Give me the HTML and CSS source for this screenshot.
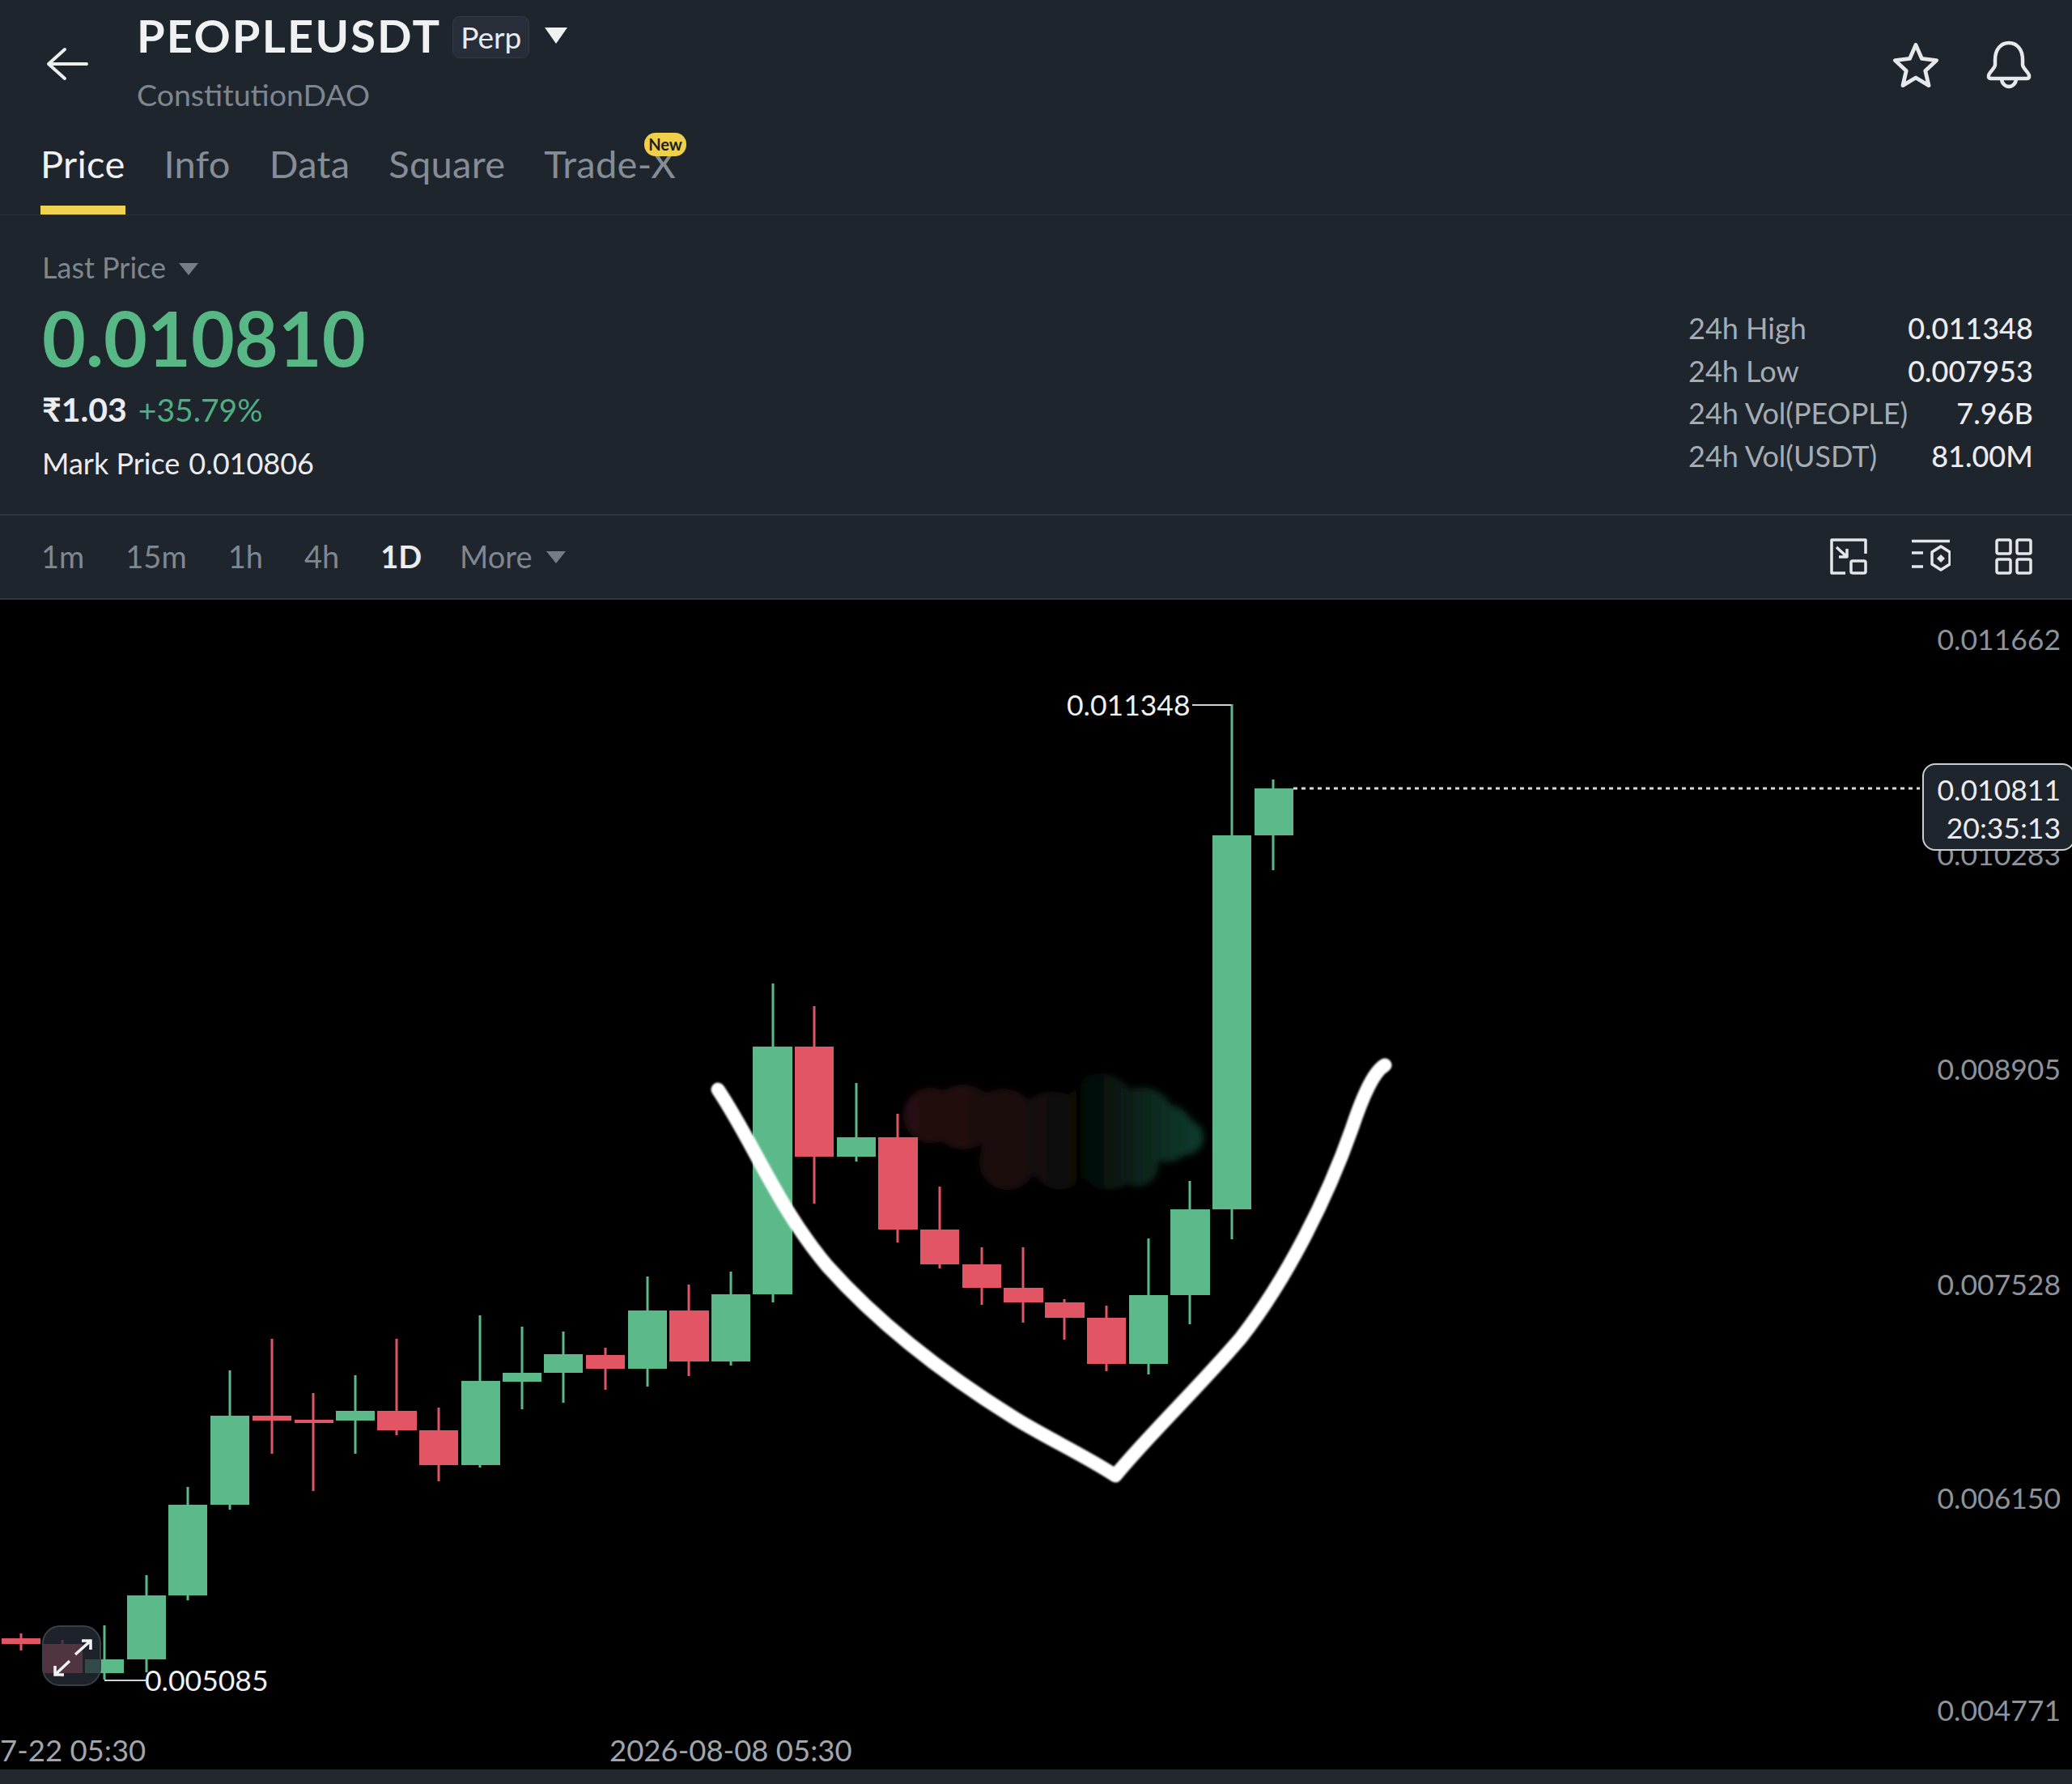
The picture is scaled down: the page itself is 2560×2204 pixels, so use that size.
FILE: index.html
```html
<!DOCTYPE html>
<html lang="en">
<head>
    <meta charset="UTF-8">
    <title>PEOPLEUSDT Perp</title>
    <link rel="stylesheet" href="styles.css">
</head>
<body>
<div class="page">
    <div class="top">
        <svg class="back" width="52" height="42" viewBox="0 0 52 42"><path d="M50 21H4M23 3 3 21l20 18"/></svg>
        <div class="title-block">
            <div class="title-row">
                <span class="symbol">PEOPLEUSDT</span>
                <span class="perp">Perp</span>
                <span class="caret caret-white"></span>
            </div>
            <div class="subtitle">ConstitutionDAO</div>
        </div>
        <div class="top-actions">
            <svg class="top-icon" width="62" height="62" viewBox="0 0 58 58"><path d="M29 5 36 21 53 23 40 35 44 52 29 43 14 52 18 35 5 23 22 21Z"/></svg>
            <svg class="top-icon" width="56" height="60" viewBox="0 0 56 60"><path d="M11 24C11 11 18 3 28 3S45 11 45 24V30C45 34 52 39 53 43 53.500 46 52 47 50 47H6C4 47 2.500 46 3 43 4 39 11 34 11 30ZM19 47A9 10 0 0 0 37 47"/></svg>
        </div>
    </div>

    <div class="tabs">
        <span class="tab active">Price</span>
        <span class="tab">Info</span>
        <span class="tab">Data</span>
        <span class="tab">Square</span>
        <span class="tab">Trade-X<span class="new">New</span></span>
    </div>

    <div class="stats">
        <div class="price-col">
            <div class="last-label">Last Price <span class="caret caret-grey"></span></div>
            <div class="last-price">0.010810</div>
            <div class="fiat-row"><span class="fiat">₹1.03</span><span class="change">+35.79%</span></div>
            <div class="mark-row"><span>Mark Price</span><span>0.010806</span></div>
        </div>
        <div class="day-grid">
            <span class="day-label">24h High</span><span class="day-value">0.011348</span>
            <span class="day-label">24h Low</span><span class="day-value">0.007953</span>
            <span class="day-label">24h Vol(PEOPLE)</span><span class="day-value">7.96B</span>
            <span class="day-label">24h Vol(USDT)</span><span class="day-value">81.00M</span>
        </div>
    </div>

    <div class="toolbar">
        <div class="intervals">
            <span>1m</span>
            <span>15m</span>
            <span>1h</span>
            <span>4h</span>
            <span class="current">1D</span>
            <span class="more">More <span class="caret caret-grey"></span></span>
        </div>
        <div class="tools">
            <svg class="tool" width="46" height="45" viewBox="0 0 46 45"><path d="M44 19V2H2V43H19M8 11 21 23M21 13V23H11"/><rect x="26" y="28" width="18" height="15" rx="2"/></svg>
            <svg class="tool" width="48" height="42" viewBox="0 0 48 42"><path d="M0 2.500H47M0 17H14M0 34H14M36 9 47 16V31L36 38 25 31V16Z"/><path class="tool-dot" d="M36 19 41 24 36 29 31 24Z"/></svg>
            <svg class="tool" width="46" height="45" viewBox="0 0 46 45"><rect x="2" y="2" width="17" height="17" rx="2"/><rect x="27" y="2" width="17" height="17" rx="2"/><rect x="2" y="26" width="17" height="17" rx="2"/><rect x="27" y="26" width="17" height="17" rx="2"/></svg>
        </div>
    </div>

    <div class="chart">
        <svg class="plot" width="2560" height="1445" viewBox="0 741 2560 1445">
            <defs>
                <linearGradient id="smudge-fade" gradientUnits="userSpaceOnUse" x1="1120" y1="0" x2="1480" y2="0">
                    <stop offset="0" stop-color="#261112"/>
                    <stop offset="0.4" stop-color="#1a0c0d"/>
                    <stop offset="0.6" stop-color="#050605"/>
                    <stop offset="0.85" stop-color="#0a2a20"/>
                    <stop offset="1" stop-color="#0e3a2c"/>
                </linearGradient>
                <filter id="soft"><feGaussianBlur stdDeviation="1.2"/></filter>
                <filter id="softer"><feGaussianBlur stdDeviation="4"/></filter>
            </defs>

            <!-- wiped out candles -->
            <g class="smudge">
                <circle cx="1150" cy="1378" r="34"/>
                <circle cx="1190" cy="1380" r="40"/>
                <circle cx="1240" cy="1385" r="40"/>
                <circle cx="1245" cy="1435" r="35"/>
                <circle cx="1300" cy="1390" r="42"/>
                <circle cx="1310" cy="1435" r="35"/>
                <circle cx="1360" cy="1368" r="42"/>
                <circle cx="1370" cy="1430" r="40"/>
                <circle cx="1410" cy="1385" r="42"/>
                <circle cx="1440" cy="1400" r="36"/>
                <circle cx="1405" cy="1440" r="26"/>
                <circle cx="1465" cy="1405" r="22"/>
            </g>

            <!-- candles, left to right -->
            <g class="up">
                <path d="M129 2008V2075M181 1946V2066M232 1837V1977M284 1693V1865M439 1699V1796M593 1625V1813M645 1639V1741M696 1645V1733M800 1577V1713M903 1571V1687M955 1215V1609M1058 1338V1435M1419 1530V1698M1470 1459V1636M1522 870V1531M1573 963V1075"/>
                <rect x="105" y="2050" width="48" height="17"/>
                <rect x="157" y="1971" width="48" height="79"/>
                <rect x="208" y="1859" width="48" height="112"/>
                <rect x="260" y="1749" width="48" height="110"/>
                <rect x="415" y="1743" width="48" height="12"/>
                <rect x="570" y="1706" width="48" height="104"/>
                <rect x="621" y="1696" width="48" height="11"/>
                <rect x="672" y="1673" width="48" height="23"/>
                <rect x="776" y="1619" width="48" height="72"/>
                <rect x="879" y="1599" width="48" height="83"/>
                <rect x="930" y="1293" width="49" height="306"/>
                <rect x="1034" y="1405" width="48" height="24"/>
                <rect x="1395" y="1600" width="48" height="85"/>
                <rect x="1446" y="1494" width="49" height="106"/>
                <rect x="1498" y="1032" width="48" height="462"/>
                <rect x="1550" y="974" width="48" height="58"/>
            </g>
            <g class="down">
                <path d="M26 2018V2039M77 2026V2072M336 1654V1796M387 1721V1842M490 1654V1773M542 1739V1830M748 1665V1717M851 1587V1700M1006 1243V1487M1109 1376V1535M1161 1466V1567M1213 1541V1612M1264 1541V1634M1315 1605V1655M1367 1613V1694"/>
                <rect x="2" y="2024" width="48" height="7"/>
                <rect x="53" y="2031" width="49" height="36"/>
                <rect x="312" y="1749" width="48" height="6"/>
                <rect x="364" y="1754" width="48" height="4"/>
                <rect x="466" y="1743" width="49" height="24"/>
                <rect x="518" y="1767" width="48" height="43"/>
                <rect x="724" y="1674" width="48" height="17"/>
                <rect x="827" y="1619" width="49" height="63"/>
                <rect x="982" y="1293" width="48" height="136"/>
                <rect x="1085" y="1405" width="49" height="114"/>
                <rect x="1137" y="1519" width="48" height="43"/>
                <rect x="1189" y="1562" width="48" height="29"/>
                <rect x="1240" y="1591" width="49" height="18"/>
                <rect x="1291" y="1609" width="49" height="19"/>
                <rect x="1343" y="1628" width="48" height="57"/>
            </g>

            <path class="leader" d="M1473 871H1521M129 2076H180"/>
            <path class="last-line" d="M1598 974H2372"/>

            <text class="mark" x="1318" y="884">0.011348</text>
            <text class="mark" x="179" y="2089">0.005085</text>

            <text class="axis" x="2546" y="803">0.011662</text>
            <text class="axis" x="2546" y="1069">0.010283</text>
            <text class="axis" x="2546" y="1334">0.008905</text>
            <text class="axis" x="2546" y="1600">0.007528</text>
            <text class="axis" x="2546" y="1864">0.006150</text>
            <text class="axis" x="2546" y="2126">0.004771</text>

            <text class="time" x="0" y="2176">7-22 05:30</text>
            <text class="time" x="753" y="2176">2026-08-08 05:30</text>

            <!-- hand drawn cup -->
            <path class="cup" d="M887 1346C930 1410 960 1490 1022 1564 1090 1640 1170 1700 1252 1751 1290 1775 1340 1798 1378 1823 1420 1772 1480 1715 1533 1653 1590 1580 1640 1480 1670 1395 1680 1365 1695 1325 1711 1316"/>
        </svg>

        <div class="price-tag">
            <span>0.010811</span>
            <span>20:35:13</span>
        </div>

        <div class="expand">
            <svg width="60" height="60" viewBox="0 0 60 60"><path d="M53 11 34 28M42 11H53V22M27 36 9 53M9 42V53H20"/></svg>
        </div>
    </div>

    <div class="bottom-bar"></div>
</div>
</body>
</html>
```

FILE: styles.css
```css
body {
    margin: 0;
    background: #000;
    font-family: Lato, "Liberation Sans", sans-serif;
    color: #eaecef;
}
.page {
    width: 2560px;
    height: 2204px;
    display: flex;
    flex-direction: column;
    overflow: hidden;
    background: #1f252d;
}

/* caret triangles */
.caret {
    display: inline-block;
    width: 0;
    height: 0;
    border-style: solid;
    border-color: transparent;
    border-bottom-width: 0;
}
.caret-white {
    border-width: 20px 14px 0;
    border-top-color: #f0f1f3;
}
.caret-grey {
    border-width: 15px 12px 0;
    border-top-color: #757d87;
}

/* top bar */
.top {
    height: 155px;
    display: flex;
    align-items: flex-start;
    padding: 0 50px 0 57px;
    box-sizing: border-box;
}
.back {
    margin-top: 58px;
    fill: none;
    stroke: #eceef0;
    stroke-width: 4;
    stroke-linecap: round;
    stroke-linejoin: round;
}
.title-block {
    margin-left: 60px;
    padding-top: 20px;
}
.title-row {
    display: flex;
    align-items: center;
    height: 52px;
}
.symbol {
    font-size: 56px;
    font-weight: 700;
    letter-spacing: 2.200px;
    color: #f0f1f3;
    margin: 0 14px 6px 0;
}
.perp {
    height: 52px;
    line-height: 50px;
    box-sizing: border-box;
    padding: 0 9px;
    border: 1px solid #323944;
    border-radius: 9px;
    background: #272e39;
    font-size: 37px;
    margin-right: 19px;
}
.title-row .caret {
    margin-top: -5px;
}
.subtitle {
    margin-top: 22px;
    font-size: 37.500px;
    color: #7e8690;
}
.top-actions {
    margin-left: auto;
    display: flex;
    gap: 56px;
    padding-top: 50px;
}
.top-icon {
    fill: none;
    stroke: #e6e8eb;
    stroke-width: 4.500;
    stroke-linejoin: round;
    stroke-linecap: round;
}

/* tabs */
.tabs {
    height: 111px;
    box-sizing: border-box;
    display: flex;
    gap: 48px;
    padding: 19px 0 0 50px;
    border-bottom: 1px solid #2b3139;
}
.tab {
    position: relative;
    height: 91px;
    box-sizing: border-box;
    font-size: 47px;
    letter-spacing: 0.300px;
    line-height: 56px;
    color: #868d96;
}
.tab.active {
    color: #f0f1f3;
    border-bottom: 11px solid #efd24f;
}
.new {
    position: absolute;
    top: -10px;
    right: -13px;
    width: 52px;
    height: 29px;
    line-height: 29px;
    border-radius: 14px;
    background: #f0d04b;
    color: #1a1d21;
    font-size: 20px;
    font-weight: 700;
    letter-spacing: 0;
    text-align: center;
}

/* price block */
.stats {
    height: 371px;
    box-sizing: border-box;
    display: flex;
    justify-content: space-between;
    padding: 43px 52px 0 52px;
    border-bottom: 2px solid #2f3640;
}
.last-label {
    font-size: 36px;
    line-height: 42px;
    color: #7e8690;
}
.last-label .caret {
    margin-left: 7px;
    vertical-align: 4px;
}
.last-price {
    margin-top: 18px;
    font-size: 93px;
    line-height: 96px;
    font-weight: 700;
    color: #57b886;
}
.fiat-row {
    margin-top: 18px;
    display: flex;
    gap: 14px;
    font-size: 39px;
    line-height: 46px;
}
.fiat {
    font-size: 41px;
    font-weight: 700;
}
.change {
    color: #4fae82;
}
.mark-row {
    margin-top: 22px;
    display: flex;
    gap: 11px;
    font-size: 36px;
    line-height: 42px;
}
.day-grid {
    width: 422px;
    margin-top: 70px;
    align-self: flex-start;
    display: grid;
    grid-template-columns: auto auto;
    justify-content: space-between;
    grid-auto-rows: 52.600px;
    align-items: center;
    font-size: 36px;
    white-space: nowrap;
}
.day-label {
    color: #a6acb4;
}
.day-value {
    text-align: right;
    font-weight: 500;
}

/* interval bar */
.toolbar {
    height: 104px;
    box-sizing: border-box;
    display: flex;
    align-items: center;
    justify-content: space-between;
    padding: 0 49px 2px 51px;
    border-bottom: 2px solid #2f3640;
}
.intervals {
    display: flex;
    gap: 51px;
    font-size: 38px;
    color: #7f8791;
}
.intervals .current {
    color: #eaecef;
    font-weight: 700;
}
.more {
    margin-left: -4px;
}
.more .caret {
    margin-left: 8px;
    vertical-align: 6px;
}
.tools {
    display: flex;
    align-items: center;
    gap: 55px;
}
.tool {
    fill: none;
    stroke: #e4e6e9;
    stroke-width: 3.500;
    stroke-linejoin: round;
}
.tool .tool-dot {
    fill: #e4e6e9;
    stroke: none;
}

/* chart */
.chart {
    position: relative;
    flex: 1;
    background: #000;
    overflow: hidden;
}
.plot {
    display: block;
}
.up rect {
    fill: #5bb98a;
}
.up path {
    stroke: #5bb98a;
    stroke-width: 3;
    fill: none;
}
.down rect {
    fill: #e25564;
}
.down path {
    stroke: #e25564;
    stroke-width: 3;
    fill: none;
}
.smudge {
    fill: url(#smudge-fade);
    filter: url(#softer);
}
.leader {
    fill: none;
    stroke: #cfd2d6;
    stroke-width: 2;
}
.last-line {
    fill: none;
    stroke: #d7dadd;
    stroke-width: 3;
    stroke-dasharray: 5 5;
}
.mark {
    font-size: 35.500px;
    fill: #eef0f2;
}
.axis {
    font-size: 35.500px;
    fill: #8d939b;
    text-anchor: end;
}
.time {
    font-size: 36.500px;
    fill: #a1a6ac;
}
.cup {
    fill: none;
    stroke: #fff;
    stroke-width: 17;
    stroke-linecap: round;
    stroke-linejoin: round;
    filter: url(#soft);
}
.price-tag {
    position: absolute;
    right: -4px;
    top: 202px;
    width: 189px;
    height: 108px;
    box-sizing: border-box;
    padding: 7px 16px 0 0;
    display: flex;
    flex-direction: column;
    align-items: flex-end;
    border: 2px solid #c9ccd0;
    border-radius: 16px;
    background: #1f252d;
    font-size: 35.500px;
    line-height: 47px;
}
.expand {
    position: absolute;
    left: 52px;
    top: 1267px;
    width: 73px;
    height: 75px;
    box-sizing: border-box;
    display: flex;
    align-items: center;
    justify-content: center;
    border: 2px solid #3a4048;
    border-radius: 22px;
    background: rgba(38, 44, 54, 0.78);
}
.expand svg {
    fill: none;
    stroke: #f2f3f5;
    stroke-width: 3.500;
}

.bottom-bar {
    height: 18px;
    background: #23282f;
}
```
